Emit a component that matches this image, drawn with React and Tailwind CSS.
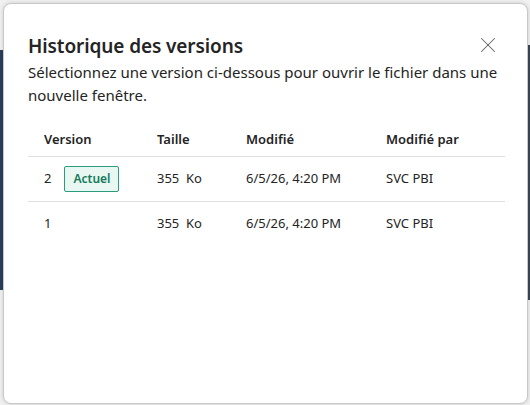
import { X } from 'lucide-react';

const rows = [
  { version: '2', current: true, size: '355  Ko', modified: '6/5/26, 4:20 PM', by: 'SVC PBI' },
  { version: '1', current: false, size: '355  Ko', modified: '6/5/26, 4:20 PM', by: 'SVC PBI' },
];

function App() {
  return (
    <div className="relative w-[530px] h-[405px] overflow-hidden bg-[#f0f0f0] font-['Noto_Sans','Open_Sans',sans-serif] text-[#242424]">
      {/* page behind the dialog */}
      <div className="absolute left-0 top-[50px] w-[6px] h-[240px] bg-[#2c3e5d]" />
      <div className="absolute right-0 top-[45px] w-[6px] h-[255px] bg-[#3b4656]" />

      <div className="relative ml-[3px] mt-[3px] w-[525px] h-[401px] bg-white rounded-[8px] border border-[#c8c8c8] shadow-[0_0_4px_rgba(0,0,0,0.15)]">
        <div className="flex items-start justify-between pl-[24px] pr-[26px] pt-[29px]">
          <h1 className="text-[19px] leading-[26px] font-semibold tracking-[-0.1px]">Historique des versions</h1>
          <button className="-mt-[1px] text-[#616161]">
            <X size={26} strokeWidth={0.95} />
          </button>
        </div>
        <p className="pl-[24px] pr-[20px] mt-[2px] text-[15px] leading-[23px]">
          Sélectionnez une version ci-dessous pour ouvrir le fichier dans une nouvelle fenêtre.
        </p>

        <table className="ml-[24px] mt-[19px] w-[477px] text-[13px] border-collapse">
          <thead>
            <tr className="border-b border-[#e0e0e0] h-[30px]">
              <th className="w-[113px] pl-[16px] text-left font-semibold align-top pt-[4px]">Version</th>
              <th className="w-[89px] pl-[16px] text-left font-semibold align-top pt-[4px]">Taille</th>
              <th className="w-[140px] pl-[16px] text-left font-semibold align-top pt-[4px]">Modifié</th>
              <th className="pl-[16px] text-left font-semibold align-top pt-[4px]">Modifié par</th>
            </tr>
          </thead>
          <tbody>
            {rows.map((r) => (
              <tr key={r.version} className="border-b border-[#e0e0e0] last:border-b-0 h-[45px]">
                <td className="pl-[16px]">
                  <div className="flex items-center gap-[13px]">
                    <span>{r.version}</span>
                    {r.current && (
                      <span className="px-[8px] h-[26px] flex items-center rounded-[2px] border border-[#2a9d7c] bg-[#e8f7f1] text-[#13795b] text-[12px] font-semibold">
                        Actuel
                      </span>
                    )}
                  </div>
                </td>
                <td className="pl-[16px] whitespace-pre">{r.size}</td>
                <td className="pl-[16px]">{r.modified}</td>
                <td className="pl-[16px]">{r.by}</td>
              </tr>
            ))}
          </tbody>
        </table>
      </div>
    </div>
  );
}

export default App;
